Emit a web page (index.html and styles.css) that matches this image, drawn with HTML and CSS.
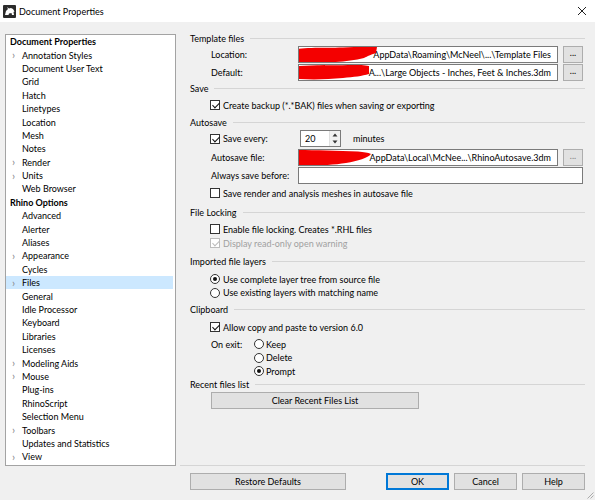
FILE: index.html
```html
<!DOCTYPE html>
<html>
<head>
<meta charset="utf-8">
<link rel="stylesheet" href="styles.css">
</head>
<body>
<div class="window">
  <div class="titlebar">
    <svg class="title-icon" viewBox="0 0 13 13" width="13" height="13">
      <rect x="0" y="0" width="13" height="13" rx="1" fill="#2b2b2b"/>
      <path d="M2 10 L3 6 L5 4 L4 2 L6 3.5 L8 3 L10 4 L11.5 6.5 L10.5 7 L11 10 L9 10 L8.5 8 L6 8.5 L5.5 10 Z" fill="#fff"/>
    </svg>
    <span class="title">Document Properties</span>
    <svg class="close" viewBox="0 0 10 10" width="10" height="10">
      <path d="M1 1 L9 9 M9 1 L1 9" stroke="#222" stroke-width="1" fill="none"/>
    </svg>
  </div>
  <div class="main">
    <div class="tree">
      <div class="item head">Document Properties</div>
      <div class="item child"><span class="chev">&#x203A;</span>Annotation Styles</div>
      <div class="item child"><span class="chev"></span>Document User Text</div>
      <div class="item child"><span class="chev"></span>Grid</div>
      <div class="item child"><span class="chev"></span>Hatch</div>
      <div class="item child"><span class="chev"></span>Linetypes</div>
      <div class="item child"><span class="chev"></span>Location</div>
      <div class="item child"><span class="chev"></span>Mesh</div>
      <div class="item child"><span class="chev"></span>Notes</div>
      <div class="item child"><span class="chev">&#x203A;</span>Render</div>
      <div class="item child"><span class="chev">&#x203A;</span>Units</div>
      <div class="item child"><span class="chev"></span>Web Browser</div>
      <div class="item head">Rhino Options</div>
      <div class="item child"><span class="chev"></span>Advanced</div>
      <div class="item child"><span class="chev"></span>Alerter</div>
      <div class="item child"><span class="chev"></span>Aliases</div>
      <div class="item child"><span class="chev">&#x203A;</span>Appearance</div>
      <div class="item child"><span class="chev"></span>Cycles</div>
      <div class="item child selected"><span class="chev">&#x203A;</span>Files</div>
      <div class="item child"><span class="chev"></span>General</div>
      <div class="item child"><span class="chev"></span>Idle Processor</div>
      <div class="item child"><span class="chev"></span>Keyboard</div>
      <div class="item child"><span class="chev"></span>Libraries</div>
      <div class="item child"><span class="chev"></span>Licenses</div>
      <div class="item child"><span class="chev">&#x203A;</span>Modeling Aids</div>
      <div class="item child"><span class="chev">&#x203A;</span>Mouse</div>
      <div class="item child"><span class="chev"></span>Plug-ins</div>
      <div class="item child"><span class="chev"></span>RhinoScript</div>
      <div class="item child"><span class="chev"></span>Selection Menu</div>
      <div class="item child"><span class="chev">&#x203A;</span>Toolbars</div>
      <div class="item child"><span class="chev"></span>Updates and Statistics</div>
      <div class="item child"><span class="chev">&#x203A;</span>View</div>
    </div>
    <div class="right">
      <div class="content">
        <div class="hdr h14">Template files</div>
        <div class="row field h18">
          <span class="lbl">Location:</span>
          <div class="tb path"><span>AppData\Roaming\McNeel\...\Template Files</span>
            <svg class="scribble" viewBox="0 0 82 18" width="82" height="18"><path d="M0 3 C10 1 30 2 45 1.5 C58 1 70 0 79 1 L78 7 C72 9 70 10 66 12 C55 15 40 16 28 16.5 C18 17 8 16.5 0 16 Z" fill="#f40000"/></svg>
          </div>
          <div class="btn dots">...</div>
        </div>
        <div class="row field h18">
          <span class="lbl">Default:</span>
          <div class="tb path"><span>A...\Large Objects - Inches, Feet &amp; Inches.3dm</span>
            <svg class="scribble" viewBox="0 0 82 18" width="82" height="18"><path d="M0 2 C15 1 35 1.5 50 1 C60 0.5 66 1 71 2 L71 10 C64 12 56 13 45 14 C30 15.5 15 16 0 15 Z" fill="#f40000"/></svg>
          </div>
          <div class="btn dots">...</div>
        </div>
        <div class="hdr h14">Save</div>
        <div class="row check h20"><span class="cb on"></span>Create backup (*.*BAK) files when saving or exporting</div>
        <div class="hdr h14">Autosave</div>
        <div class="row check h19">
          <span class="cb on"></span><span class="every">Save every:</span>
          <div class="spin"><span class="spinval">20</span>
            <div class="arrows">
              <svg viewBox="0 0 8 6" width="8" height="6"><path d="M1.5 4.5 L4 1.5 L6.5 4.5 Z" fill="#333"/></svg>
              <svg viewBox="0 0 8 6" width="8" height="6"><path d="M1.5 1.5 L4 4.5 L6.5 1.5 Z" fill="#333"/></svg>
            </div>
          </div>
          <span class="minutes">minutes</span>
        </div>
        <div class="row field h18">
          <span class="lbl">Autosave file:</span>
          <div class="tb path"><span>AppData\Local\McNee...\RhinoAutosave.3dm</span>
            <svg class="scribble" viewBox="0 0 82 18" width="82" height="18"><path d="M0 1 C15 1 40 2 60 2.5 C66 3 70 3.5 73 5 C70 9 60 12 48 14 C35 16 18 17 0 17 Z" fill="#f40000"/></svg>
          </div>
          <div class="btn dots disabled">...</div>
        </div>
        <div class="row field h18">
          <span class="lbl">Always save before:</span>
          <div class="tb wide"></div>
        </div>
        <div class="row check h18"><span class="cb"></span>Save render and analysis meshes in autosave file</div>
        <div class="hdr h20">File Locking</div>
        <div class="row check h14"><span class="cb"></span>Enable file locking. Creates *.RHL files</div>
        <div class="row check h14 dis"><span class="cb on dis"></span>Display read-only open warning</div>
        <div class="hdr h22">Imported file layers</div>
        <div class="row check h14"><span class="rb on"></span>Use complete layer tree from source file</div>
        <div class="row check h13"><span class="rb"></span>Use existing layers with matching name</div>
        <div class="hdr h21">Clipboard</div>
        <div class="row check h14"><span class="cb on"></span>Allow copy and paste to version 6.0</div>
        <div class="exit">
          <span class="exitlbl">On exit:</span>
          <div class="exitopts">
            <div class="opt h14"><span class="rb"></span>Keep</div>
            <div class="opt h13"><span class="rb"></span>Delete</div>
            <div class="opt h14"><span class="rb on"></span>Prompt</div>
          </div>
        </div>
        <div class="hdr h12">Recent files list</div>
        <div class="btn clear">Clear Recent Files List</div>
      </div>
      <div class="sep"></div>
      <div class="footer">
        <div class="btn restore">Restore Defaults</div>
        <div class="btn ok">OK</div>
        <div class="btn std">Cancel</div>
        <div class="btn std">Help</div>
      </div>
    </div>
  </div>
  <svg class="grip" viewBox="0 0 8 8" width="8" height="8">
    <path d="M7.5 1.5 L1.5 7.5 M7.5 4.5 L4.5 7.5" stroke="#999" stroke-width="0.8" fill="none"/>
  </svg>
</div>
</body>
</html>
```
FILE: styles.css
```css
* { box-sizing: border-box; }
html, body { margin: 0; padding: 0; }
body {
  width: 595px;
  height: 500px;
  overflow: hidden;
  background: #f0f0f0;
  font-family: Lato, "Liberation Sans", sans-serif;
  font-size: 9px;
  color: #000;
}
.window {
  position: relative;
  display: flex;
  flex-direction: column;
  height: 500px;
}
.titlebar {
  height: 22px;
  background: #fff;
  display: flex;
  align-items: center;
  padding-left: 3px;
  flex: none;
}
.title-icon { margin-right: 3px; }
.title { font-size: 9px; }
.close { margin-left: auto; margin-right: 8px; }

.main { flex: 1; display: flex; min-height: 0; }

.tree {
  margin: 12px 0 0 5px;
  width: 171px;
  height: 432px;
  background: #fff;
  border: 1px solid #a3a3a3;
  flex: none;
}
.item {
  height: 13.4px;
  display: flex;
  align-items: center;
  white-space: nowrap;
  margin-right: 2px;
}
.item.head { padding-left: 4px; font-weight: bold; }
.item.child .chev {
  width: 16px;
  padding-left: 6px;
  color: #888;
  font-size: 11px;
  line-height: 10px;
}
.item.selected { background: #cce8ff; }

.right {
  flex: 1;
  display: flex;
  flex-direction: column;
  margin-left: 4px;
  padding: 9px 10px 0 0;
}
.content { flex: 1; padding-left: 10px; }

.h12 { height: 12px; }
.h13 { height: 13px; }
.h14 { height: 14px; }
.h18 { height: 18px; }
.h19 { height: 19px; }
.h20 { height: 20px; }
.h21 { height: 21px; }
.h22 { height: 22px; }

.hdr {
  display: flex;
  align-items: center;
  white-space: nowrap;
}
.hdr::after {
  content: "";
  flex: 1;
  height: 1px;
  background: #d5d5d5;
  margin-left: 6px;
}

.row {
  display: flex;
  align-items: center;
  white-space: nowrap;
}
.row.field { padding-left: 21px; padding-right: 2px; }
.row.check { padding-left: 20px; }
.row.dis { color: #a0a0a0; }

.lbl { width: 87px; flex: none; }

.tb {
  position: relative;
  height: 17px;
  background: #fff;
  border: 1px solid #7a7a7a;
  display: flex;
  align-items: center;
  overflow: hidden;
}
.tb.path {
  width: 260px;
  justify-content: flex-end;
  padding-right: 6px;
}
.tb.wide { flex: 1; }
.tb.path span { white-space: nowrap; flex: none; }
.scribble { position: absolute; left: -1px; top: -1px; }

.btn {
  height: 17px;
  background: #e1e1e1;
  border: 1px solid #adadad;
  display: flex;
  align-items: center;
  justify-content: center;
  white-space: nowrap;
}
.btn.dots { width: 20px; margin-left: 5px; padding-bottom: 3px; }
.btn.dots.disabled { color: #838383; }

.cb {
  position: relative;
  width: 10px;
  height: 10px;
  border: 1px solid #333;
  background: #fff;
  flex: none;
  margin-right: 3px;
}
.cb.on::after {
  content: "";
  position: absolute;
  left: 2.5px;
  top: 0px;
  width: 3px;
  height: 6px;
  border: solid #111;
  border-width: 0 1px 1px 0;
  transform: rotate(45deg);
}
.cb.dis { border-color: #bcbcbc; }
.cb.dis::after { border-color: #bcbcbc; }

.rb {
  width: 10px;
  height: 10px;
  border-radius: 50%;
  border: 1px solid #333;
  background: #fff;
  flex: none;
  margin-right: 3px;
  display: flex;
  align-items: center;
  justify-content: center;
}
.rb.on::after {
  content: "";
  width: 4px;
  height: 4px;
  border-radius: 50%;
  background: #111;
}

.every { width: 77px; flex: none; }
.spin {
  width: 41px;
  height: 17px;
  background: #fff;
  border: 1px solid #7a7a7a;
  display: flex;
  align-items: center;
}
.spinval { flex: 1; padding-left: 4px; }
.arrows {
  width: 11px;
  height: 15px;
  display: flex;
  flex-direction: column;
  justify-content: space-around;
  align-items: center;
  background: #f0f0f0;
  border-left: 1px solid #e0e0e0;
}
.minutes { margin-left: 12px; }

.exit {
  display: flex;
  padding-left: 21px;
  margin-top: 3px;
}
.exitlbl { width: 43px; height: 14px; display: flex; align-items: center; flex: none; }
.opt { display: flex; align-items: center; white-space: nowrap; }
.opt .rb { margin-right: 2px; }

.btn.clear { width: 208px; margin-left: 21px; margin-top: 2px; }

.sep { height: 1px; background: #d5d5d5; flex: none; }

.footer {
  display: flex;
  gap: 5px;
  padding-left: 10px;
  margin: 7px 0 10px;
  flex: none;
}
.btn.restore { width: 156px; margin-right: auto; }
.btn.ok { width: 63px; border: 2px solid #0078d7; }
.btn.std { width: 63px; }

.grip { position: absolute; right: 1px; bottom: 1px; }
```
